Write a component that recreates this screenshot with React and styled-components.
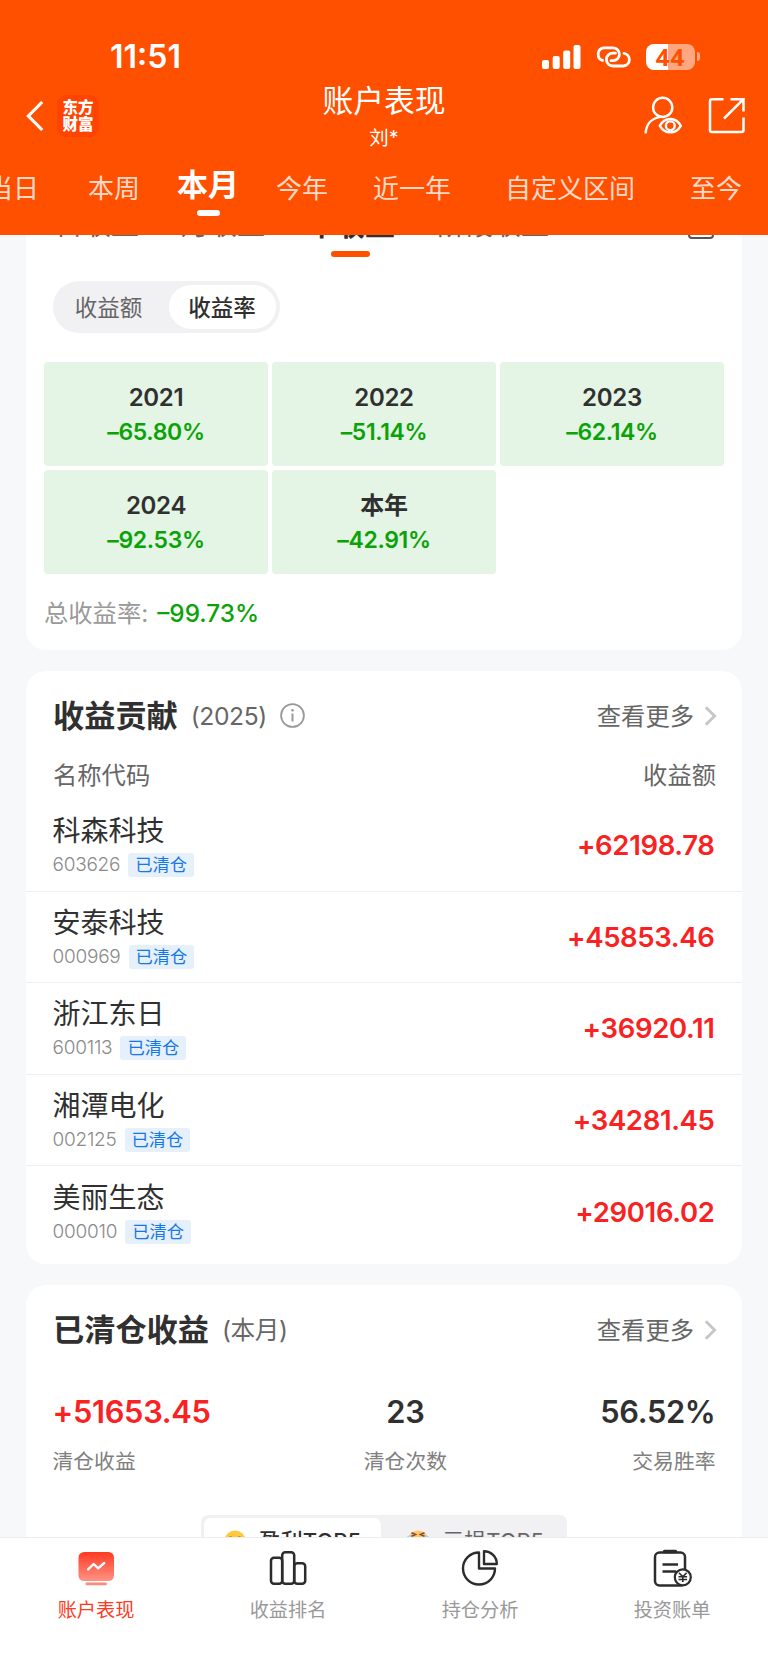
import React from 'react';
import styled, { createGlobalStyle } from 'styled-components';

const COLOR = {
  BRAND: '#ff5000',
  RED: '#f92222',
  GREEN: '#0aa307',
  TEXT: '#303030',
  GRAY: '#666666',
  LIGHT: '#999999',
  PAGE: '#f7f8fa',
};

const GlobalStyle = createGlobalStyle`
  * { box-sizing: border-box; }
  body {
    margin: 0;
    background: ${COLOR.PAGE};
    color: ${COLOR.TEXT};
    font-family: Inter, "Noto Sans CJK SC", sans-serif;
  }
  svg { display: block; flex-shrink: 0; }
`;

const Screen = styled.div`
  width: 768px;
  height: 1669px;
  display: flex;
  flex-direction: column;
  overflow: hidden;
`;

/* ---------- header ---------- */

const Header = styled.header`
  height: 235px;
  flex-shrink: 0;
  background: ${COLOR.BRAND};
  color: #fff;
`;

const StatusBar = styled.div`
  height: 84px;
  padding: 30px 68px 0 110px;
  display: flex;
  align-items: center;
  justify-content: space-between;
`;

const Clock = styled.span`
  font-size: 32px;
  font-weight: 600;
  line-height: 36px;
`;

const StatusIcons = styled.div`
  padding-bottom: 1px;
  display: flex;
  align-items: center;
  gap: 14px;
`;

const Battery = styled.div`
  display: flex;
  align-items: center;
  gap: 2px;
`;

const BatteryBody = styled.div`
  width: 49px;
  height: 26px;
  border-radius: 8px;
  background: linear-gradient(90deg, #fff 44%, #ffa780 44%);
  color: ${COLOR.BRAND};
  font-family: "Open Sans", sans-serif;
  font-size: 24px;
  font-weight: 700;
  letter-spacing: 1px;
  line-height: 25px;
  text-align: center;
`;

const BatteryCap = styled.div`
  width: 3px;
  height: 9px;
  border-radius: 0 3px 3px 0;
  background: #ffa780;
`;

const TitleBar = styled.div`
  height: 64px;
  padding: 0 23px 0 23px;
  display: grid;
  grid-template-columns: 1fr auto 1fr;
  align-items: center;
`;

const TitleLeft = styled.div`
  padding: 0 0 2px 3px;
  display: flex;
  align-items: center;
  gap: 13px;
`;

const Logo = styled.div`
  width: 42px;
  height: 42px;
  padding-top: 4px;
  border-radius: 9px;
  background: #ff4300;
  font-size: 15.5px;
  font-weight: 900;
  line-height: 17px;
  text-align: center;
`;

const TitleText = styled.div`
  display: flex;
  flex-direction: column;
  align-items: center;
  gap: 8px;
`;

const Title = styled.h1`
  margin: 0;
  font-size: 30.8px;
  font-weight: 400;
  line-height: 34px;
`;

const UserName = styled.span`
  font-size: 19.5px;
  line-height: 24px;
`;

const TitleActions = styled.div`
  padding-bottom: 4px;
  display: flex;
  align-items: center;
  justify-content: flex-end;
  gap: 26px;
`;

const PeriodTabs = styled.nav`
  height: 87px;
  margin-left: -13px;
  display: flex;
  align-items: flex-start;
  white-space: nowrap;
`;

const PeriodTab = styled.div`
  margin-right: ${(p) => p.$gap}px;
  padding-top: ${(p) => (p.$active ? 17 : 21)}px;
  display: flex;
  flex-direction: column;
  align-items: center;
  gap: 5px;
  font-size: ${(p) => (p.$active ? 31 : 26)}px;
  font-weight: ${(p) => (p.$active ? 700 : 400)};
  line-height: 40px;
  color: ${(p) => (p.$active ? '#fff' : 'rgba(255, 255, 255, 0.8)')};
`;

const TabMark = styled.i`
  width: ${(p) => p.$width}px;
  height: 6px;
  border-radius: 3px;
  background: ${(p) => p.$color};
`;

/* ---------- cards ---------- */

const Content = styled.main`
  flex: 1;
  min-height: 0;
  overflow: hidden;
  padding: 0 26px;
  display: flex;
  flex-direction: column;
  gap: 21px;
`;

const Card = styled.section`
  flex-shrink: 0;
  height: ${(p) => p.$height}px;
  background: #fff;
  border-radius: ${(p) => (p.$top ? '0 0 20px 20px' : '20px')};
`;

const ChartTabs = styled.div`
  height: 22px;
  padding: 0 28px 0 29px;
  display: flex;
  align-items: flex-end;
  white-space: nowrap;
`;

const ChartTab = styled.div`
  height: 57px;
  margin-right: ${(p) => p.$gap}px;
  display: flex;
  flex-direction: column;
  align-items: center;
  justify-content: space-between;
  font-size: ${(p) => (p.$active ? 30 : 28)}px;
  font-weight: ${(p) => (p.$active ? 700 : 400)};
  line-height: ${(p) => (p.$active ? 48 : 50)}px;
  color: ${(p) => (p.$active ? COLOR.TEXT : COLOR.GRAY)};
`;

const CalendarSlot = styled.div`
  height: 57px;
  margin-left: auto;
  padding-top: 12px;
`;

const Segment = styled.div`
  width: 227px;
  height: 52px;
  margin: 24px 0 0 26.5px;
  padding: 4px;
  display: flex;
  border-radius: 26px;
  background: #f1f1f4;
`;

const SegmentItem = styled.div`
  width: ${(p) => p.$width}px;
  padding-right: ${(p) => (p.$active ? 0 : 8)}px;
  border-radius: 23px;
  background: ${(p) => (p.$active ? '#fff' : 'transparent')};
  color: ${(p) => (p.$active ? COLOR.TEXT : COLOR.GRAY)};
  font-size: 22.5px;
  font-weight: ${(p) => (p.$active ? 500 : 400)};
  line-height: 45px;
  text-align: center;
`;

const YearGrid = styled.div`
  margin: 29px 18px 0;
  display: grid;
  grid-template-columns: repeat(3, 224px);
  grid-auto-rows: 104px;
  gap: 4px;
`;

const YearCell = styled.div`
  padding-top: 19px;
  border-radius: 4px;
  background: #e4f4e5;
  text-align: center;
  line-height: 34px;
`;

const YearName = styled.div`
  font-size: 24px;
  font-weight: 600;
  letter-spacing: -0.3px;
`;

const YearRate = styled.div`
  font-size: 23px;
  font-weight: 600;
  letter-spacing: -0.35px;
  color: ${COLOR.GREEN};
`;

const Total = styled.div`
  margin: 22px 18px 0;
  display: flex;
  gap: 9px;
  font-size: 24.3px;
  line-height: 34px;
  color: ${COLOR.LIGHT};
`;

const TotalRate = styled.span`
  font-weight: 500;
  color: ${COLOR.GREEN};
`;

const CardHead = styled.div`
  height: 45px;
  margin-top: 22px;
  padding: 0 25px 0 27px;
  display: flex;
  align-items: center;
`;

const CardTitle = styled.h2`
  margin: 0;
  font-size: 31.2px;
  font-weight: 700;
  line-height: 44px;
`;

const CardNote = styled.span`
  margin: 0 13px;
  font-size: 24.6px;
  letter-spacing: -0.4px;
  line-height: 44px;
  color: ${COLOR.GRAY};
`;

const More = styled.div`
  margin-left: auto;
  display: flex;
  align-items: center;
  gap: 10px;
  font-size: 24.3px;
  line-height: 44px;
  color: ${COLOR.GRAY};
`;

const ListHead = styled.div`
  height: 61px;
  padding: 0 26px 0 27px;
  display: flex;
  justify-content: space-between;
  font-size: 24.3px;
  line-height: 74px;
  color: ${COLOR.GRAY};
`;

const StockRow = styled.div`
  height: 91.6px;
  padding: 0 27.5px 0 26.5px;
  display: flex;
  align-items: center;
  justify-content: space-between;
  & + & { border-top: 1px solid #f0f0f2; }
`;

const StockName = styled.div`
  font-size: 28px;
  line-height: 36px;
`;

const StockMeta = styled.div`
  margin-top: 4px;
  display: flex;
  align-items: center;
  gap: 8px;
`;

const StockCode = styled.span`
  font-size: 19px;
  font-weight: 300;
  letter-spacing: -0.25px;
  line-height: 24px;
  color: #8a8a8a;
`;

const Tag = styled.span`
  height: 24px;
  padding: 0 7px;
  border-radius: 3px;
  background: #e6f0fb;
  color: #1677e8;
  font-size: 17.3px;
  line-height: 24px;
`;

const Amount = styled.span`
  font-size: 27.5px;
  font-weight: 600;
  letter-spacing: -0.35px;
  color: ${COLOR.RED};
`;

const Stats = styled.div`
  height: 125px;
  margin-top: 38px;
  padding: 0 26.5px;
  display: flex;
  justify-content: space-between;
`;

const Stat = styled.div`
  text-align: ${(p) => p.$align};
`;

const StatValue = styled.div`
  font-size: 30.8px;
  font-weight: 600;
  letter-spacing: -0.3px;
  line-height: 44px;
  color: ${(p) => p.$color || COLOR.TEXT};
`;

const StatLabel = styled.div`
  margin-top: 10px;
  font-size: 20.8px;
  line-height: 36px;
  color: #808080;
`;

const TopSwitch = styled.div`
  width: 366px;
  height: 52px;
  margin: 0 auto 0 175px;
  padding: 3px;
  display: flex;
  border-radius: 7px;
  background: #f1f1f4;
`;

const TopItem = styled.div`
  width: ${(p) => p.$width}px;
  padding: 0 20px 0 ${(p) => (p.$active ? 20 : 25)}px;
  display: flex;
  align-items: center;
  justify-content: space-between;
  border-radius: 7px;
  background: ${(p) => (p.$active ? '#fff' : 'transparent')};
  color: ${(p) => (p.$active ? COLOR.TEXT : COLOR.GRAY)};
  font-size: 22px;
  font-weight: ${(p) => (p.$active ? 500 : 400)};
  line-height: 46px;
`;

/* ---------- bottom bar ---------- */

const BottomBar = styled.footer`
  height: 132px;
  flex-shrink: 0;
  padding-top: 11px;
  display: grid;
  grid-template-columns: repeat(4, 1fr);
  border-top: 1px solid #ededf0;
  background: #fff;
`;

const BottomItem = styled.div`
  display: flex;
  flex-direction: column;
  align-items: center;
  gap: 8px;
  font-size: 19.2px;
  line-height: 30px;
  color: ${(p) => (p.$active ? '#ff3a22' : COLOR.LIGHT)};
`;

/* ---------- icons ---------- */

const SignalIcon = () => (
  <svg width="39" height="26" viewBox="0 0 39 26" fill="#fff">
    <rect x="0" y="16" width="7" height="9" rx="2" />
    <rect x="10.7" y="12" width="7" height="13" rx="2" />
    <rect x="21.2" y="6.5" width="7" height="18.5" rx="2" />
    <rect x="31.5" y="1" width="7" height="24" rx="2" />
  </svg>
);

const LinkIcon = () => (
  <svg width="37" height="24" viewBox="0 0 37 24" fill="none" stroke="#fff" strokeWidth="2.8" strokeLinecap="round">
    <path d="M7.5 15.4A6.5 6.5 0 0 1 8.5 2.9H18A6.4 6.4 0 0 1 18 15.7H16" />
    <path d="M29 8.3A6.4 6.4 0 0 1 28.4 21H17.8A6.4 6.4 0 0 1 17.8 8.2H20.5" />
  </svg>
);

const BackIcon = () => (
  <svg width="18" height="32" viewBox="0 0 18 32" fill="none" stroke="#fff" strokeWidth="3.2">
    <path d="M16.2 2L2.4 16L16.2 30" />
  </svg>
);

const UserEyeIcon = () => (
  <svg width="38" height="38" viewBox="0 0 38 38" fill="none" stroke="#fff" strokeWidth="2.4">
    <circle cx="18.7" cy="11.4" r="9.6" />
    <path d="M1.6 37.5C2.2 28 8 21.8 17.5 20.6" />
    <path d="M15.8 29.8C21 20.8 31.8 20.8 36.8 29.8C31.8 38.5 21 38.5 15.8 29.8Z" />
    <circle cx="26.3" cy="29.8" r="4.4" />
  </svg>
);

const ShareIcon = () => (
  <svg width="37" height="37" viewBox="0 0 37 37" fill="none" stroke="#fff" strokeWidth="2.5">
    <path d="M15.5 2.2H4Q2 2.2 2 4.2V33Q2 35 4 35H33.5Q35.5 35 35.5 33V20.5" />
    <path d="M22.5 2.2H35.5V14.5M35.5 2.2L16 21.5" />
  </svg>
);

const CalendarIcon = () => (
  <svg width="26" height="27" viewBox="0 0 26 27" fill="none" stroke="#555" strokeWidth="2">
    <rect x="1" y="1" width="24" height="25" rx="3" />
  </svg>
);

const InfoIcon = () => (
  <svg width="25" height="25" viewBox="0 0 25 25" fill="none" stroke="#999" strokeWidth="1.8">
    <circle cx="12.5" cy="12.5" r="11.4" />
    <path d="M12.5 10.5V18.5" strokeWidth="2" />
    <circle cx="12.5" cy="7.2" r="1.3" fill="#999" stroke="none" />
  </svg>
);

const ArrowIcon = () => (
  <svg width="13" height="20" viewBox="0 0 13 20" fill="none" stroke="#c6c6c6" strokeWidth="2.8">
    <path d="M1.8 1.2L10.6 10L1.8 18.8" />
  </svg>
);

const SmileIcon = () => (
  <svg width="22" height="22" viewBox="0 0 22 22">
    <circle cx="11" cy="11" r="10.5" fill="#ffc83d" />
    <path d="M4.5 8.5Q6.5 5.5 8.5 8.5M13.5 8.5Q15.5 5.5 17.5 8.5" fill="none" stroke="#b86f1c" strokeWidth="1.3" />
    <path d="M5 12Q11 19 17 12Z" fill="#8a4a12" />
  </svg>
);

const CryIcon = () => (
  <svg width="24" height="22" viewBox="0 0 24 22">
    <circle cx="12" cy="11" r="10.5" fill="#ffc663" />
    <path d="M5.5 2.8L9.5 4.5L5.5 6.2M18.5 2.8L14.5 4.5L18.5 6.2" fill="none" stroke="#7b4a3c" strokeWidth="1.5" />
    <path d="M1 7Q1 5 5 5.5V16Q1 14 1 7ZM23 7Q23 5 19 5.5V16Q23 14 23 7Z" fill="#9ed8f5" />
  </svg>
);

const BoardIcon = () => (
  <svg width="38" height="38" viewBox="0 0 38 38">
    <defs>
      <linearGradient id="board" x1="0" y1="0" x2="0" y2="1">
        <stop offset="0" stopColor="#ff3a22" />
        <stop offset="1" stopColor="#ff9385" />
      </linearGradient>
    </defs>
    <rect x="1.5" y="3" width="35.5" height="29" rx="5.5" fill="url(#board)" />
    <rect x="8.5" y="33.5" width="21.5" height="2.8" rx="1.4" fill="#ff8a7b" />
    <path d="M11.2 20.3L16.6 15L21.2 19.4L27.2 14" fill="none" stroke="#fff" strokeWidth="2.4" strokeLinecap="round" strokeLinejoin="round" />
  </svg>
);

const RankIcon = () => (
  <svg width="38" height="38" viewBox="0 0 38 38" fill="none" stroke="#2c2c2c" strokeWidth="2.5">
    <rect x="2" y="8.8" width="11.2" height="26" rx="3" />
    <rect x="13.2" y="3.2" width="12" height="31.6" rx="3" />
    <rect x="25.2" y="14.3" width="11" height="20.5" rx="3" />
  </svg>
);

const PieIcon = () => (
  <svg width="38" height="38" viewBox="0 0 38 38" fill="none" stroke="#2c2c2c" strokeWidth="2.4" strokeLinejoin="round">
    <path d="M18 3.5A16 16 0 1 0 34 19.5H18Z" />
    <path d="M23 2.2V15H35.8A12.8 12.8 0 0 0 23 2.2Z" />
  </svg>
);

const BillIcon = () => (
  <svg width="40" height="38" viewBox="0 0 40 38" fill="none" stroke="#2c2c2c" strokeWidth="2.5">
    <rect x="3" y="3.5" width="30" height="33" rx="4.5" />
    <path d="M12.5 2.5H23.5" strokeWidth="3.4" strokeLinecap="round" />
    <path d="M10.5 15.5H26M10.5 22.5H24" />
    <circle cx="30.8" cy="28.3" r="8" fill="#fff" strokeWidth="2.2" />
    <path d="M27 23.8L30.8 27.8L34.6 23.8M26.5 27.8H35.1M26.5 30.5H35.1M30.8 27.8V33" strokeWidth="1.6" />
  </svg>
);

/* ---------- data ---------- */

const periods = [
  { name: '当日', gap: 49 },
  { name: '本周', gap: 37 },
  { name: '本月', gap: 37, active: true },
  { name: '今年', gap: 45 },
  { name: '近一年', gap: 54 },
  { name: '自定义区间', gap: 55 },
  { name: '至今', gap: 0 },
];

const chartTabs = [
  { name: '日收益', gap: 42 },
  { name: '月收益', gap: 40 },
  { name: '年收益', gap: 42, active: true },
  { name: '阶段收益', gap: 0 },
];

const years = [
  { name: '2021', rate: '–65.80%' },
  { name: '2022', rate: '–51.14%' },
  { name: '2023', rate: '–62.14%' },
  { name: '2024', rate: '–92.53%' },
  { name: '本年', rate: '–42.91%' },
];

const stocks = [
  { name: '科森科技', code: '603626', amount: '+62198.78' },
  { name: '安泰科技', code: '000969', amount: '+45853.46' },
  { name: '浙江东日', code: '600113', amount: '+36920.11' },
  { name: '湘潭电化', code: '002125', amount: '+34281.45' },
  { name: '美丽生态', code: '000010', amount: '+29016.02' },
];

const menu = [
  { name: '账户表现', icon: <BoardIcon />, active: true },
  { name: '收益排名', icon: <RankIcon /> },
  { name: '持仓分析', icon: <PieIcon /> },
  { name: '投资账单', icon: <BillIcon /> },
];

const MoreLink = () => (
  <More>
    查看更多
    <ArrowIcon />
  </More>
);

export default function App() {
  return (
    <Screen>
      <GlobalStyle />
      <Header>
        <StatusBar>
          <Clock>11:51</Clock>
          <StatusIcons>
            <SignalIcon />
            <LinkIcon />
            <Battery>
              <BatteryBody>44</BatteryBody>
              <BatteryCap />
            </Battery>
          </StatusIcons>
        </StatusBar>
        <TitleBar>
          <TitleLeft>
            <BackIcon />
            <Logo>东方<br />财富</Logo>
          </TitleLeft>
          <TitleText>
            <Title>账户表现</Title>
            <UserName>刘*</UserName>
          </TitleText>
          <TitleActions>
            <UserEyeIcon />
            <ShareIcon />
          </TitleActions>
        </TitleBar>
        <PeriodTabs>
          {periods.map((p) => (
            <PeriodTab key={p.name} $gap={p.gap} $active={p.active}>
              {p.name}
              {p.active && <TabMark $width={23} $color="#fff" />}
            </PeriodTab>
          ))}
        </PeriodTabs>
      </Header>

      <Content>
        <Card $top $height={415}>
          <ChartTabs>
            {chartTabs.map((t) => (
              <ChartTab key={t.name} $gap={t.gap} $active={t.active}>
                {t.name}
                {t.active && <TabMark $width={39} $color={COLOR.BRAND} />}
              </ChartTab>
            ))}
            <CalendarSlot><CalendarIcon /></CalendarSlot>
          </ChartTabs>
          <Segment>
            <SegmentItem $width={112}>收益额</SegmentItem>
            <SegmentItem $width={107} $active>收益率</SegmentItem>
          </Segment>
          <YearGrid>
            {years.map((y) => (
              <YearCell key={y.name}>
                <YearName>{y.name}</YearName>
                <YearRate>{y.rate}</YearRate>
              </YearCell>
            ))}
          </YearGrid>
          <Total>
            总收益率:
            <TotalRate>–99.73%</TotalRate>
          </Total>
        </Card>

        <Card $height={593}>
          <CardHead>
            <CardTitle>收益贡献</CardTitle>
            <CardNote>(2025)</CardNote>
            <InfoIcon />
            <MoreLink />
          </CardHead>
          <ListHead>
            <span>名称代码</span>
            <span>收益额</span>
          </ListHead>
          {stocks.map((s) => (
            <StockRow key={s.code}>
              <div>
                <StockName>{s.name}</StockName>
                <StockMeta>
                  <StockCode>{s.code}</StockCode>
                  <Tag>已清仓</Tag>
                </StockMeta>
              </div>
              <Amount>{s.amount}</Amount>
            </StockRow>
          ))}
        </Card>

        <Card $height={400}>
          <CardHead>
            <CardTitle>已清仓收益</CardTitle>
            <CardNote>(本月)</CardNote>
            <MoreLink />
          </CardHead>
          <Stats>
            <Stat $align="left">
              <StatValue $color={COLOR.RED}>+51653.45</StatValue>
              <StatLabel>清仓收益</StatLabel>
            </Stat>
            <Stat $align="center">
              <StatValue>23</StatValue>
              <StatLabel>清仓次数</StatLabel>
            </Stat>
            <Stat $align="right">
              <StatValue>56.52%</StatValue>
              <StatLabel>交易胜率</StatLabel>
            </Stat>
          </Stats>
          <TopSwitch>
            <TopItem $width={177} $active>
              <SmileIcon />
              盈利TOP5
            </TopItem>
            <TopItem $width={183}>
              <CryIcon />
              亏损TOP5
            </TopItem>
          </TopSwitch>
        </Card>
      </Content>

      <BottomBar>
        {menu.map((m) => (
          <BottomItem key={m.name} $active={m.active}>
            {m.icon}
            {m.name}
          </BottomItem>
        ))}
      </BottomBar>
    </Screen>
  );
}
